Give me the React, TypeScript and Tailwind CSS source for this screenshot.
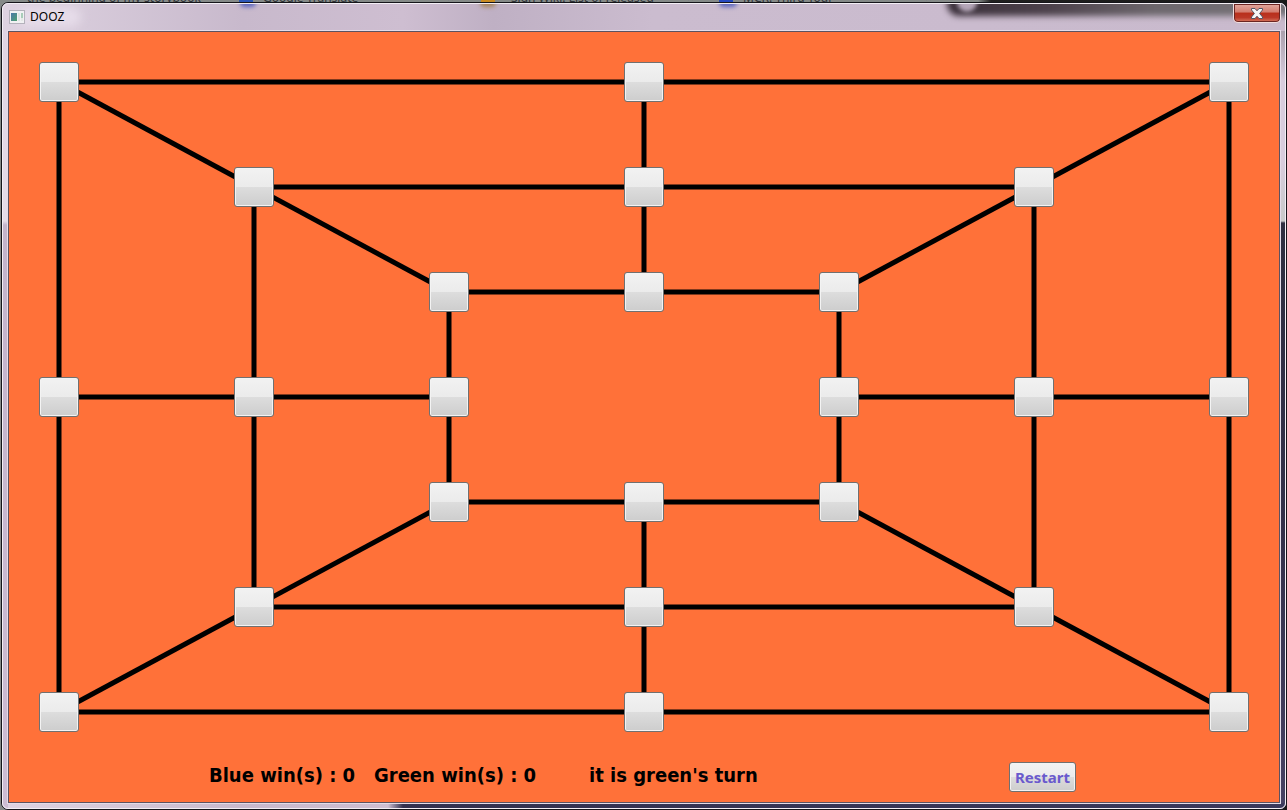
import React from "react";

const BOARD_W = 1270;
const BOARD_H = 710;

type Point = [number, number];

const columns = [50, 245, 440, 635, 830, 1025, 1220];
const rows = [50, 155, 260, 365, 470, 575, 680];

// Column / row indexes of every playable spot
const spots: Point[] = [
  [0, 0], [3, 0], [6, 0],
  [1, 1], [3, 1], [5, 1],
  [2, 2], [3, 2], [4, 2],
  [0, 3], [1, 3], [2, 3], [4, 3], [5, 3], [6, 3],
  [2, 4], [3, 4], [4, 4],
  [1, 5], [3, 5], [5, 5],
  [0, 6], [3, 6], [6, 6],
];

const edges: [Point, Point][] = [
  [[0, 0], [6, 0]], [[6, 0], [6, 6]], [[0, 6], [6, 6]], [[0, 0], [0, 6]],
  [[1, 1], [5, 1]], [[5, 1], [5, 5]], [[1, 5], [5, 5]], [[1, 1], [1, 5]],
  [[2, 2], [4, 2]], [[4, 2], [4, 4]], [[2, 4], [4, 4]], [[2, 2], [2, 4]],
  [[3, 0], [3, 2]], [[3, 4], [3, 6]], [[0, 3], [2, 3]], [[4, 3], [6, 3]],
  [[0, 0], [2, 2]], [[6, 0], [4, 2]], [[0, 6], [2, 4]], [[6, 6], [4, 4]],
];

const px = (c: number) => `${(columns[c] / BOARD_W) * 100}%`;
const py = (r: number) => `${(rows[r] / BOARD_H) * 100}%`;

// Lower edge of the browser tabs that stay visible behind the window
function TabsBehind() {
  return (
    <div
      aria-hidden="true"
      className="flex h-[2px] items-end overflow-hidden pl-[26px] text-[12px] leading-[8px] whitespace-nowrap text-[#303438]"
    >
      <span className="w-[182px]">the beginning of my storybook</span>
      <span className="w-[30px]">×</span>
      <span className="mr-[10px] h-[8px] w-[14px] bg-[#2a56b8]" />
      <span className="w-[184px]">Google Translate</span>
      <span className="w-[34px]">×</span>
      <span className="mr-[16px] h-[8px] w-[14px] bg-[#c98b20]" />
      <span className="w-[176px]">Sign Wiki: List of released</span>
      <span className="w-[32px]">×</span>
      <span className="mr-[10px] h-[8px] w-[14px] bg-[#2448c0]" />
      <span className="w-[182px]">MCR: Third Tour</span>
      <span>×</span>
    </div>
  );
}

// Blurred shapes seen through the glass of the title bar
function GlassReflections() {
  return (
    <div aria-hidden="true" className="pointer-events-none absolute inset-x-0 top-0 h-[26px] overflow-hidden rounded-t-[5px]">
      <div className="absolute -top-[8px] -right-[8px] h-[20px] w-[346px] rounded-bl-[12px] bg-[linear-gradient(90deg,#3a2f3a_0%,#4d424c_30%,#6c666c_60%,#77747a_100%)] blur-[3px]" />
      <div className="absolute -top-[12px] right-[308px] size-[20px] rounded-full bg-[#b5a7b9] blur-[2px]" />
      <div className="absolute -top-[6px] left-[237px] h-[9px] w-[16px] rounded-full bg-[#5b66c0] blur-[2px]" />
      <div className="absolute -top-[6px] left-[477px] h-[9px] w-[16px] rounded-full bg-[#a5845a] blur-[2px]" />
      <div className="absolute -top-[6px] left-[716px] h-[9px] w-[18px] rounded-full bg-[#5b66c0] blur-[2px]" />
      <div className="absolute top-[3px] left-[14px] h-[20px] w-[64px] rounded-full bg-[#e6dce9] blur-[5px]" />
    </div>
  );
}

function WindowIcon() {
  return (
    <svg width="16" height="14" viewBox="0 0 16 14" aria-hidden="true" shapeRendering="crispEdges">
      <defs>
        <linearGradient id="pane" x1="0" y1="0" x2="1" y2="1">
          <stop offset="0" stopColor="#4a78a8" />
          <stop offset="1" stopColor="#4fa070" />
        </linearGradient>
      </defs>
      <rect x="0" y="0" width="16" height="14" fill="#b4b2bb" />
      <rect x="1" y="1" width="14" height="12" fill="#f1f1f3" />
      <rect x="2" y="3" width="6" height="8" fill="url(#pane)" />
      <rect x="9" y="3" width="2" height="8" fill="#dfe5e2" />
      <rect x="12" y="3" width="2" height="5" fill="#a9cdb9" />
      <rect x="12" y="8" width="2" height="3" fill="#e4e9e6" />
    </svg>
  );
}

function TitleBar() {
  return (
    <header className="relative flex h-[26px] shrink-0 items-start justify-between pl-[2px]">
      <div className="flex h-[26px] items-center gap-[5px]">
        <WindowIcon />
        <h1 className="text-[12px] leading-4 text-black">DOOZ</h1>
      </div>
      <button
        type="button"
        aria-label="Close"
        className="flex h-[19px] w-[48px] items-center justify-center rounded-b-[5px] border border-t-0 border-[#f0dcdc] bg-[linear-gradient(#e3aaa0_0%,#d37c6e_45%,#b92f1b_50%,#bb3827_75%,#d97a62_100%)] shadow-[inset_0_0_0_1px_#6b2522]"
      >
        <svg width="12" height="11" viewBox="0 0 12 11" aria-hidden="true">
          <path
            d="M0.5 0.5H4L6 2.8L8 0.5H11.5V2L8.6 5.5L11.5 9V10.5H8L6 8.2L4 10.5H0.5V9L3.4 5.5L0.5 2Z"
            fill="#f7f7f7"
            stroke="#535666"
            strokeWidth="1"
          />
        </svg>
      </button>
    </header>
  );
}

function Board() {
  return (
    <section aria-label="Board" className="relative min-h-[480px] flex-1">
      <svg className="absolute inset-0 h-full w-full" aria-hidden="true">
        {edges.map(([a, b], i) => (
          <line
            key={i}
            x1={px(a[0])}
            y1={py(a[1])}
            x2={px(b[0])}
            y2={py(b[1])}
            stroke="#000"
            strokeWidth="5"
          />
        ))}
      </svg>
      {spots.map(([c, r]) => (
        <button
          key={`${c}-${r}`}
          type="button"
          aria-label={`Column ${c + 1}, row ${r + 1}`}
          className="absolute size-10 -translate-x-1/2 -translate-y-1/2 rounded-[3px] border border-[#707070] bg-[linear-gradient(#f2f2f2_0%,#ebebeb_50%,#dddddd_50%,#cdcdcd_100%)] shadow-[inset_0_0_0_1px_#f3f3f3]"
          style={{ left: px(c), top: py(r) }}
        />
      ))}
    </section>
  );
}

function StatusBar() {
  return (
    <footer className="flex h-[60px] shrink-0 items-center justify-between pt-[10px] pr-[203px] pl-[200px]">
      <div className="flex pb-1 font-['DejaVu_Sans_Condensed','Noto_Sans',sans-serif] text-[20px] leading-7 font-bold whitespace-nowrap text-black">
        <p className="w-[165px]">Blue win(s) : 0</p>
        <p className="w-[215px]">Green win(s) : 0</p>
        <p>it is green's turn</p>
      </div>
      <button
        type="button"
        className="flex h-[30px] w-[67px] items-center justify-center rounded-[3px] border border-[#707070] bg-[linear-gradient(#f2f2f2_0%,#ebebeb_50%,#dddddd_50%,#cdcdcd_100%)] text-[15px] leading-5 font-bold text-[#6a5acd] shadow-[inset_0_0_0_1px_#f3f3f3]"
      >
        Restart
      </button>
    </footer>
  );
}

export default function App() {
  return (
    <div className="flex min-h-screen flex-col bg-[linear-gradient(90deg,#858a88_0%,#858a88_76%,#202020_77%,#181818_100%)] pl-px font-['Noto_Sans',sans-serif]">
      <TabsBehind />
      <div className="flex flex-1 flex-col rounded-[7px] border border-[#15151a] bg-[#cdbdd3]">
        <div className="relative flex flex-1 flex-col rounded-[6px] border border-[#f3eff5] bg-[linear-gradient(90deg,transparent_0px,transparent_385px,#33314f_400px,#3b395c_100%),linear-gradient(#aaa0ad_0px,#d8cddd_50px,#d8cddd_130px,#c9c9c9_190px,#2f2e40_192px,#34304a_500px,#484365_100%),linear-gradient(#dfd4e2_0px,#e5dce8_190px,#c3b4cb_194px,#cdbdd3_100%),linear-gradient(90deg,#ded3e1_0px,#c8b9cc_240px,#cebed1_400px,#bfb0c4_490px,#cbbccf_650px,#c9bacd_100%)] bg-[size:100%_5px,5px_100%,5px_100%,100%_100%] bg-[position:0_100%,100%_27px,0_27px,0_0] bg-no-repeat px-[4px] pb-[4px]">
          <GlassReflections />
          <TitleBar />
          <main className="relative flex flex-1 flex-col border border-[#e4dce8]">
            <div className="flex flex-1 flex-col border border-[#5c5260] bg-[#ff7139]">
              <Board />
              <StatusBar />
            </div>
          </main>
        </div>
      </div>
    </div>
  );
}
